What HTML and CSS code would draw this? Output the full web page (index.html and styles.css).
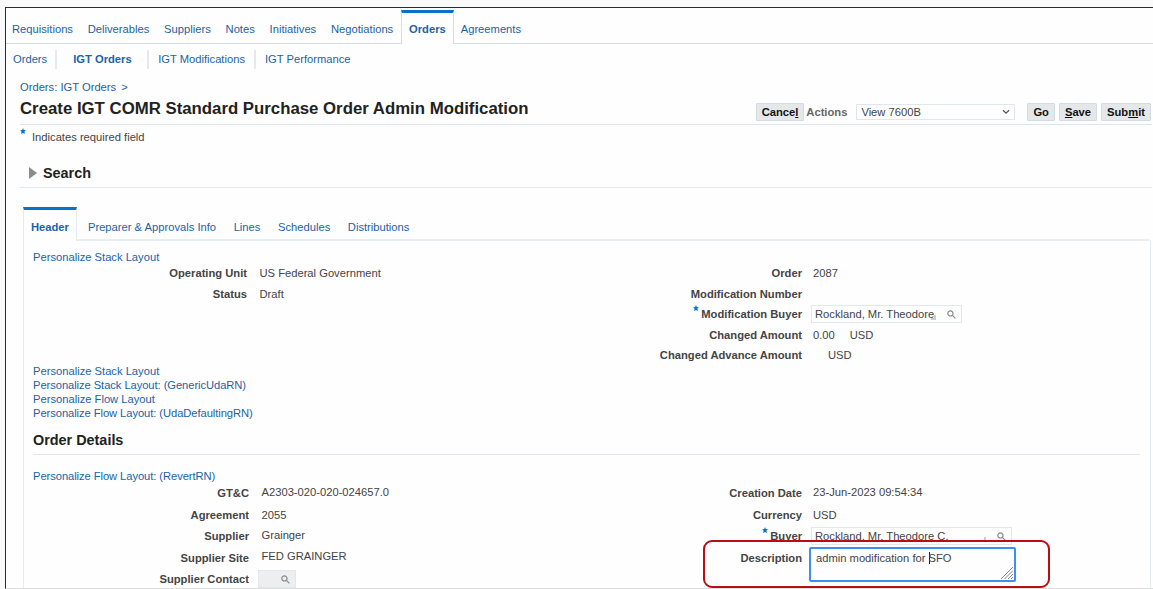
FILE: index.html
```html
<!DOCTYPE html>
<html lang="en">
<head>
    <meta charset="UTF-8">
    <meta name="viewport" content="width=device-width, initial-scale=1.0">
    <title>Create IGT COMR Standard Purchase Order Admin Modification</title>
    <link rel="stylesheet" href="styles.css">
</head>
<body>
    <div class="window">
        <nav class="main-tabs">
            <a href="#">Requisitions</a>
            <a href="#">Deliverables</a>
            <a href="#">Suppliers</a>
            <a href="#">Notes</a>
            <a href="#">Initiatives</a>
            <a href="#">Negotiations</a>
            <a href="#" class="active">Orders</a>
            <a href="#">Agreements</a>
        </nav>

        <nav class="sub-tabs">
            <a href="#">Orders</a>
            <a href="#" class="active">IGT Orders</a>
            <a href="#">IGT Modifications</a>
            <a href="#">IGT Performance</a>
        </nav>

        <main>
            <div class="breadcrumb"><a href="#">Orders: IGT Orders</a><span>&gt;</span></div>
            <div class="title-bar">
                <h1>Create IGT COMR Standard Purchase Order Admin Modification</h1>
                <div class="actions">
                    <button type="button">Cance<u>l</u></button>
                    <label for="actionList">Actions</label>
                    <div class="select" id="actionList">
                        <span>View 7600B</span>
                        <svg width="8" height="6" viewBox="0 0 8 6"><path d="M1 1.2l3 3 3-3" fill="none" stroke="#555" stroke-width="1.3"/></svg>
                    </div>
                    <button type="button" class="go">Go</button>
                    <button type="button"><u>S</u>ave</button>
                    <button type="button">Sub<u>m</u>it</button>
                </div>
            </div>
            <p class="hint"><svg class="star" viewBox="0 0 10 10"><path d="M5 0l1.3 3.2L10 3.6 7.4 6l.8 3.8L5 8.5 1.8 9.8 2.6 6 0 3.6l3.7-.4z"/></svg>Indicates required field</p>

            <h2 class="search"><svg width="8" height="12" viewBox="0 0 8 12"><path d="M0 0l8 6-8 6z" fill="#8c8c8c"/></svg>Search</h2>

            <nav class="detail-tabs">
                <a href="#" class="active">Header</a>
                <a href="#">Preparer &amp; Approvals Info</a>
                <a href="#">Lines</a>
                <a href="#">Schedules</a>
                <a href="#">Distributions</a>
            </nav>

            <section class="panel">
                <a href="#" class="personalize">Personalize Stack Layout</a>
                <div class="columns summary">
                    <div class="fields left">
                        <div class="row"><label>Operating Unit</label><span class="value">US Federal Government</span></div>
                        <div class="row"><label>Status</label><span class="value">Draft</span></div>
                    </div>
                    <div class="fields">
                        <div class="row"><label>Order</label><span class="value">2087</span></div>
                        <div class="row"><label>Modification Number</label></div>
                        <div class="row">
                            <label><svg class="star" viewBox="0 0 10 10"><path d="M5 0l1.3 3.2L10 3.6 7.4 6l.8 3.8L5 8.5 1.8 9.8 2.6 6 0 3.6l3.7-.4z"/></svg>Modification Buyer</label>
                            <div class="lov"><span>Rockland, Mr. Theodore</span><i class="grip"></i><svg class="lens" viewBox="0 0 10 10"><circle cx="3.8" cy="3.8" r="2.9"/><path d="M6 6l3.3 3.3"/></svg></div>
                        </div>
                        <div class="row"><label>Changed Amount</label><span class="value">0.00</span><span class="currency">USD</span></div>
                        <div class="row"><label>Changed Advance Amount</label><span class="currency">USD</span></div>
                    </div>
                </div>
                <a href="#" class="personalize">Personalize Stack Layout</a>
                <a href="#" class="personalize region">Personalize Stack Layout: (GenericUdaRN)</a>
                <a href="#" class="personalize">Personalize Flow Layout</a>
                <a href="#" class="personalize region">Personalize Flow Layout: (UdaDefaultingRN)</a>

                <h2 class="details-title">Order Details</h2>

                <a href="#" class="personalize region">Personalize Flow Layout: (RevertRN)</a>
                <div class="columns details">
                    <div class="fields left">
                        <div class="row"><label>GT&amp;C</label><span class="value raised">A2303-020-020-024657.0</span></div>
                        <div class="row"><label>Agreement</label><span class="value">2055</span></div>
                        <div class="row"><label>Supplier</label><span class="value raised">Grainger</span></div>
                        <div class="row"><label>Supplier Site</label><span class="value raised">FED GRAINGER</span></div>
                        <div class="row">
                            <label>Supplier Contact</label>
                            <div class="lov disabled"><svg class="lens" viewBox="0 0 10 10"><circle cx="3.8" cy="3.8" r="2.9"/><path d="M6 6l3.3 3.3"/></svg></div>
                        </div>
                    </div>
                    <div class="fields">
                        <div class="row"><label>Creation Date</label><span class="value raised">23-Jun-2023 09:54:34</span></div>
                        <div class="row"><label>Currency</label><span class="value">USD</span></div>
                        <div class="row">
                            <label><svg class="star" viewBox="0 0 10 10"><path d="M5 0l1.3 3.2L10 3.6 7.4 6l.8 3.8L5 8.5 1.8 9.8 2.6 6 0 3.6l3.7-.4z"/></svg>Buyer</label>
                            <div class="lov wide"><span>Rockland, Mr. Theodore C.</span><i class="grip"></i><svg class="lens" viewBox="0 0 10 10"><circle cx="3.8" cy="3.8" r="2.9"/><path d="M6 6l3.3 3.3"/></svg></div>
                        </div>
                        <div class="row description">
                            <label>Description</label>
                            <div class="textarea">admin modification for <i class="caret"></i>SFO
                                <svg class="resize" viewBox="0 0 12 12"><path d="M0 12L12 0M3.5 12L12 3.5M7 12l5-5M10 12l2-2"/></svg>
                            </div>
                        </div>
                    </div>
                </div>
            </section>
        </main>
    </div>
    <div class="highlight"></div>
</body>
</html>
```
FILE: styles.css
```css
* {
    box-sizing: border-box;
}

body {
    font-family: "Liberation Sans", Arial, sans-serif;
    font-size: 11.2px;
    line-height: 14px;
    margin: 0;
    padding: 7px 0 0 5px;
    height: 589px;
    overflow: hidden;
    background-color: #fafafa;
    color: #444;
}

a {
    color: #1b62a5;
    text-decoration: none;
    white-space: nowrap;
}

h1, h2, p {
    margin: 0;
}

.window {
    height: 582px;
    overflow: hidden;
    background-color: #fefefe;
    border-top: 1px solid #2b2b2b;
    border-left: 1px solid #2b2b2b;
    border-bottom: 1px solid #ddd;
}

.main-tabs {
    display: flex;
    height: 36px;
    padding-left: 6px;
    border-bottom: 1px solid #d3dde4;
}

.main-tabs a {
    padding-top: 14px;
    margin-right: 14.8px;
}

.main-tabs .active {
    height: 34px;
    margin: 2px 7px 0 -7px;
    padding: 9px 7px 0;
    border: 1px solid #d3dde4;
    border-top: 3px solid #0572ce;
    border-bottom: none;
    background-color: #fefefe;
    font-weight: bold;
}

.sub-tabs {
    display: flex;
    height: 32px;
    padding: 6px 0 0 7px;
}

.sub-tabs a {
    height: 19px;
    line-height: 19px;
    padding-right: 9px;
    margin-right: 9px;
    border-right: 2px solid #e3e9ee;
}

.sub-tabs a:first-child {
    padding-right: 8px;
}

.sub-tabs a:last-child {
    border: none;
}

.sub-tabs .active {
    padding: 0 15.5px 0 7px;
    font-weight: bold;
}

main {
    padding-left: 14px;
}

.breadcrumb {
    display: flex;
    gap: 5px;
    height: 20px;
    padding-top: 4px;
    color: #1b62a5;
}

.title-bar {
    display: flex;
    justify-content: space-between;
    height: 29px;
    margin-right: 1px;
    border-bottom: 1px solid #dde6ec;
}

h1 {
    font-size: 16.8px;
    line-height: 26px;
    color: #222;
    white-space: nowrap;
}

.actions {
    display: flex;
    align-items: center;
    height: 18px;
    margin: 7px 1px 0 0;
}

.actions label {
    margin: 0 9px 0 2px;
    font-weight: bold;
    color: #666;
}

button {
    height: 18px;
    margin: 0 0 0 4px;
    padding: 0 5px;
    border: 1px solid #d5dce1;
    border-radius: 1px;
    background-color: #e4e8eb;
    font-family: inherit;
    font-size: 11.2px;
    font-weight: bold;
    line-height: 14px;
    color: #111;
    white-space: nowrap;
}

button.go {
    margin-left: 12px;
}

.select {
    display: flex;
    justify-content: space-between;
    align-items: center;
    width: 159px;
    height: 16px;
    padding: 0 4px;
    border: 1px solid #dfe7eb;
}

.star {
    width: 6px;
    height: 6px;
    fill: #0572ce;
}

.hint {
    display: flex;
    height: 36px;
    padding-top: 5px;
}

.hint .star {
    margin: -2px 6px 0 0;
}

h2 {
    font-size: 14.4px;
    color: #222;
}

.search {
    display: flex;
    align-items: center;
    gap: 6px;
    height: 27px;
    margin-right: 1px;
    padding: 0 0 2px 9px;
    border-bottom: 1px solid #e3eaef;
}

.detail-tabs {
    display: flex;
    height: 34px;
    margin: 19px 3px 0;
    border-bottom: 2px solid #e9eef3;
}

.detail-tabs a {
    padding-top: 13px;
    margin-right: 17.6px;
}

.detail-tabs .active {
    height: 34px;
    margin-right: 11px;
    padding: 10px 7px 0;
    border: 1px solid #e3eaf0;
    border-top: 3px solid #0572ce;
    border-bottom: none;
    background-color: #fefefe;
    font-weight: bold;
}

.panel {
    height: 360px;
    margin: 0 2px 0 3px;
    padding: 10px 10px 0 9px;
    border: 1px solid #e3eaf0;
    border-top: none;
}

.personalize {
    display: block;
    line-height: 13.8px;
}

.region {
    letter-spacing: -0.07px;
}

.columns {
    display: grid;
    grid-template-columns: 554px 1fr;
}

.summary {
    height: 102.5px;
    margin-top: -2px;
}

.row {
    display: flex;
    align-items: center;
    height: 20.5px;
    white-space: nowrap;
}

.details {
    margin-top: -1.5px;
}

.details .row {
    height: 21.6px;
}

.row label {
    display: flex;
    justify-content: flex-end;
    flex-shrink: 0;
    width: 215px;
    font-weight: bold;
}

.left label {
    width: 214px;
}

.details .left label {
    width: 216px;
}

.row .star {
    margin: -2px 2px 0 0;
}

.value {
    margin-left: 11px;
}

.left .value {
    margin-left: 12.5px;
}

.raised {
    margin-top: -3px;
}

.value + .currency {
    margin-left: 15px;
}

.currency {
    margin-left: 26px;
}

.lov {
    display: flex;
    align-items: center;
    width: 151px;
    height: 18px;
    margin-left: 9px;
    padding: 0 5px 0 3px;
    border: 1px solid #dfe8ea;
}

.lov.wide {
    width: 201px;
}

.lov.disabled {
    width: 38px;
    background-color: #eceef0;
}

.grip {
    width: 5px;
    height: 5px;
    margin: 6px 0 0 -3px;
    border-right: 2px solid #ccc;
    border-bottom: 2px solid #ccc;
}

.wide .grip {
    margin-left: 33px;
}

.lens {
    width: 9px;
    height: 9px;
    margin-left: auto;
    fill: none;
    stroke: #888;
    stroke-width: 1.3;
}

.details-title {
    height: 34.5px;
    margin-bottom: 15px;
    padding-top: 12.5px;
    border-bottom: 1px solid #dde6ec;
}

.details .description {
    height: 35px;
    align-items: flex-start;
}

.description label {
    padding-top: 4px;
}

.textarea {
    position: relative;
    width: 207px;
    height: 35px;
    margin-left: 7px;
    padding: 2px 5px;
    border: 2px solid #3c8ef2;
    border-radius: 2px;
}

.caret {
    display: inline-block;
    width: 1px;
    height: 12px;
    margin-right: -1px;
    vertical-align: -2px;
    background-color: #222;
}

.resize {
    position: absolute;
    right: 1px;
    bottom: 1px;
    width: 12px;
    height: 12px;
    fill: none;
    stroke: #888;
}

/* red call-out drawn over the description field */
.highlight {
    position: absolute;
    left: 703px;
    top: 540px;
    width: 347px;
    height: 48px;
    border: 2px solid #b80d12;
    border-radius: 9px;
}
```
